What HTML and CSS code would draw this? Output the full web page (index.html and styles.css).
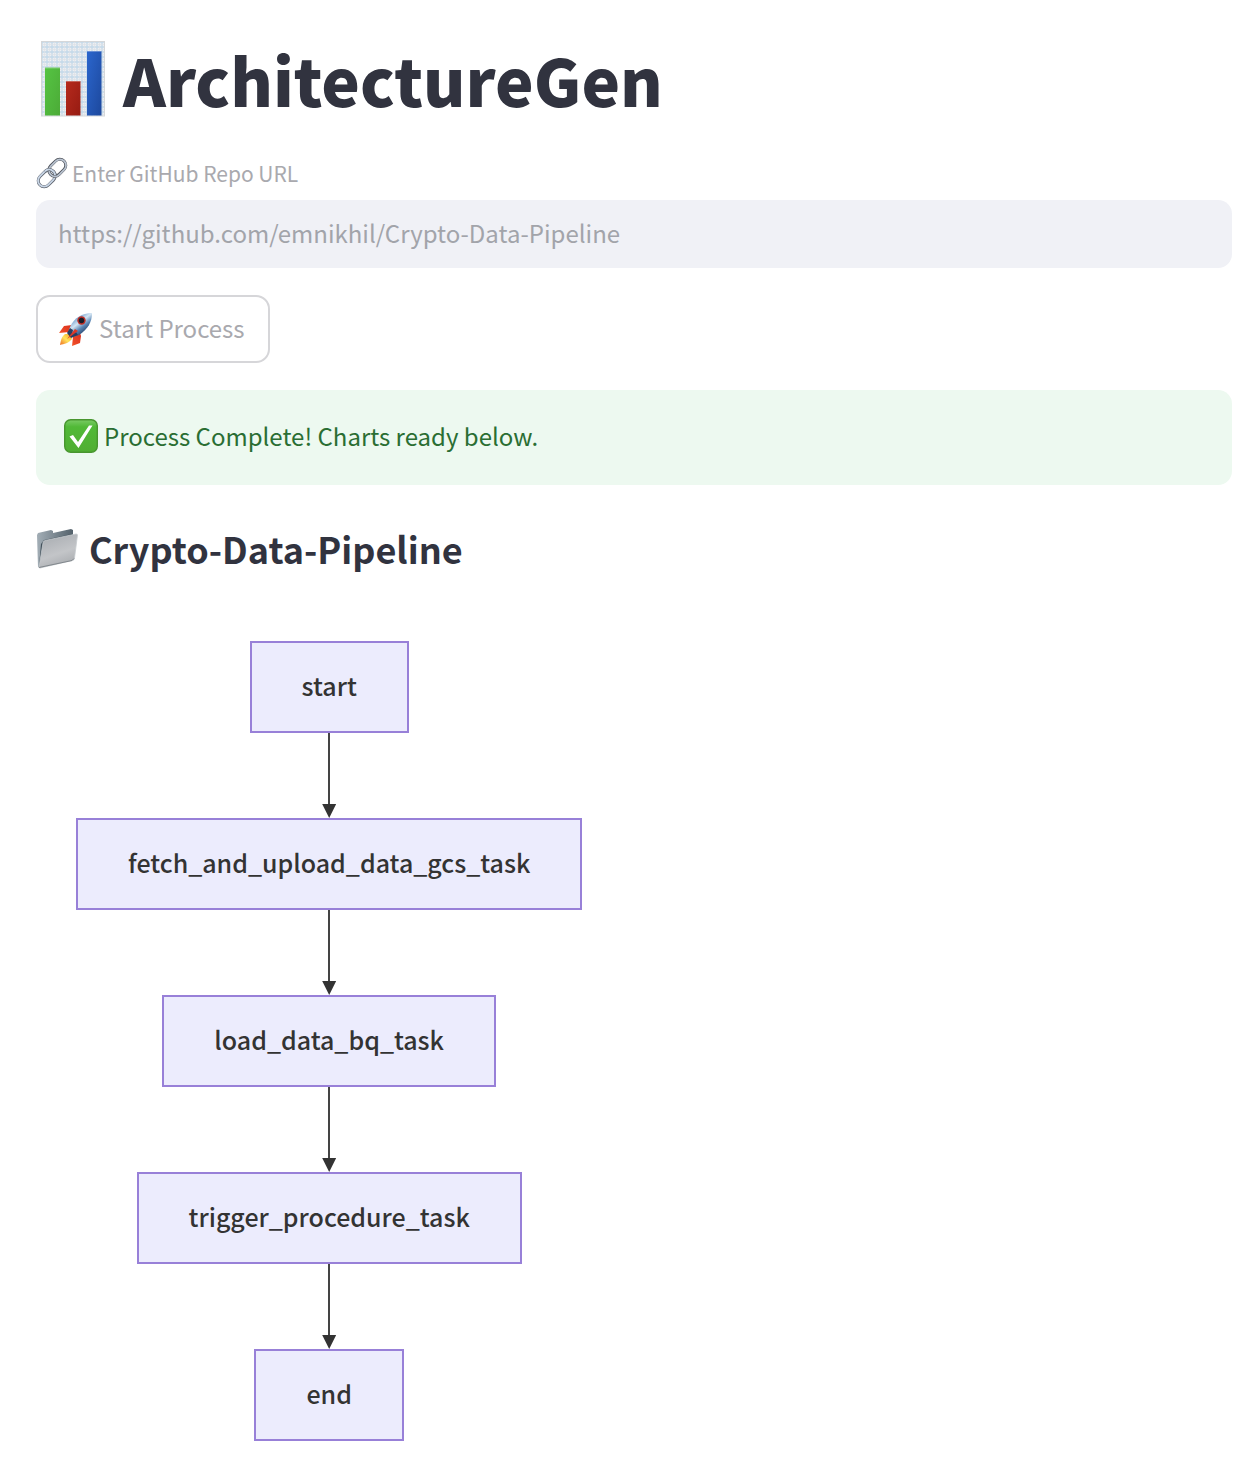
FILE: index.html
```html
<!DOCTYPE html>
<html lang="en">
<head>
<meta charset="utf-8">
<meta name="viewport" content="width=device-width, initial-scale=1">
<title>ArchitectureGen</title>
<link rel="stylesheet" href="styles.css">
</head>
<body>
<main class="app">
  <h1 class="title">
    <svg class="icon-chart" viewBox="0 0 64 76" aria-hidden="true">
      <defs>
        <pattern id="grid" width="5" height="5" patternUnits="userSpaceOnUse">
          <rect width="5" height="5" fill="#eeeff1"/>
          <path d="M0 1H5M1 0V5" stroke="#c4d9ea" stroke-width="1.3"/>
          <path d="M0 3.5H5M3.5 0V5" stroke="#dde3e8" stroke-width=".7"/>
        </pattern>
        <linearGradient id="green" x2="1" y2="1"><stop stop-color="#55c443"/><stop offset="1" stop-color="#4cab37"/></linearGradient>
        <linearGradient id="red" x2="1" y2="1"><stop stop-color="#b62a1d"/><stop offset="1" stop-color="#961b12"/></linearGradient>
        <linearGradient id="blue" x2="1" y2="1"><stop stop-color="#2b66cd"/><stop offset="1" stop-color="#1d489d"/></linearGradient>
      </defs>
      <rect x=".5" y=".5" width="63" height="74.500" fill="url(#grid)" stroke="#d5d7d9"/>
      <rect x="4" y="26.500" width="15" height="48" fill="url(#green)"/>
      <rect x="25" y="40" width="14.500" height="34.500" fill="url(#red)"/>
      <rect x="46" y="10" width="14.500" height="64.500" fill="url(#blue)"/>
      <path d="M4 27H19M25 40.500H39.500M46 10.500H60.500" stroke="#fff" stroke-opacity=".3"/>
    </svg>
    <span>ArchitectureGen</span>
  </h1>

  <form class="form">
    <label class="label" for="repo">
      <svg class="icon-link" viewBox="0 0 32 32" aria-hidden="true">
        <g fill="none" transform="rotate(-45 16 16)">
          <rect x="-1" y="10" width="19" height="12" rx="6" stroke="#5d636d" stroke-width="3"/>
          <rect x="-1" y="9.800" width="19" height="12" rx="6" stroke="#c8d5e5" stroke-width="1.900"/>
          <rect x="14" y="10" width="19" height="12" rx="6" stroke="#50545c" stroke-width="3"/>
          <rect x="14" y="10.300" width="19" height="12" rx="6" stroke="#b9c3d0" stroke-width="1.700"/>
          <path d="M12 10c6.500 0 7.500 7 4.500 10" stroke="#5d636d" stroke-width="3"/>
          <path d="M12 9.800c6.500 0 7.500 7 4.500 10" stroke="#c8d5e5" stroke-width="1.800"/>
        </g>
      </svg>
      <span>Enter GitHub Repo URL</span>
    </label>
    <input class="input" id="repo" type="text" value="https://github.com/emnikhil/Crypto-Data-Pipeline" disabled>
    <button class="button" type="button" disabled>
      <svg class="icon-rocket" viewBox="0 0 36 36" aria-hidden="true">
        <defs>
          <linearGradient id="hull" x1=".3" y1=".2" x2=".75" y2=".8"><stop stop-color="#6f9dcc"/><stop offset=".35" stop-color="#d4e5f3"/><stop offset=".65" stop-color="#5a86b5"/><stop offset="1" stop-color="#253f66"/></linearGradient>
          <linearGradient id="fin" x1="1" x2="0" y2="1"><stop stop-color="#ce2418"/><stop offset=".6" stop-color="#ee4a27"/><stop offset="1" stop-color="#ffbd46"/></linearGradient>
          <linearGradient id="flame" x1="1" x2="0" y2="1"><stop stop-color="#f7a427"/><stop offset=".5" stop-color="#ffe45c"/><stop offset="1" stop-color="#ee6a20"/></linearGradient>
        </defs>
        <path d="M14 14 6 15 1 22 11 21ZM22 22 23 25 22 32 14 35 15 26Z" fill="url(#fin)"/>
        <path d="M7 23C3 26 3 30 2 34c4-1 9-2 12-6l-2-5Z" fill="url(#flame)"/>
        <path d="M34 2C24 2 16 7 12 16l-2 6 4 4 7-2C30 18 34 11 34 2Z" fill="url(#hull)"/>
        <path d="m12 17-3 5 4 5 7-3-2-3-4 2 1-4Z" fill="#273e60"/>
        <path d="m17 18-8 10 11-8Z" fill="#db3826"/>
        <circle cx="23.500" cy="9.500" r="4.200" fill="#bd2e26"/>
        <circle cx="23.500" cy="9.500" r="2.700" fill="#171c27"/>
      </svg>
      <span class="text">Start Process</span>
    </button>
  </form>

  <div class="alert" role="status">
    <svg class="icon-check" viewBox="0 0 36 36" aria-hidden="true">
      <defs><linearGradient id="box" x2="0" y2="1"><stop stop-color="#7acb65"/><stop offset=".22" stop-color="#51b937"/><stop offset="1" stop-color="#50ae32"/></linearGradient></defs>
      <rect x="1.700" y="1.700" width="32.600" height="32.600" rx="6" fill="url(#box)" stroke="#48962f" stroke-width="1.400"/>
      <path d="M6.500 18.500 10 17l5 7L26 7.500h3.500L15.500 30Z" fill="#fff"/>
    </svg>
    <span>Process Complete! Charts ready below.</span>
  </div>

  <h2 class="heading">
    <svg class="icon-folder" viewBox="0 0 42 40" aria-hidden="true">
      <defs>
        <linearGradient id="back" x2="1"><stop stop-color="#a3aeb6"/><stop offset="1" stop-color="#53616b"/></linearGradient>
        <linearGradient id="front" x1=".2" x2=".6" y2="1"><stop stop-color="#a8acb1"/><stop offset=".6" stop-color="#c3c5c8"/><stop offset="1" stop-color="#a8abaf"/></linearGradient>
      </defs>
      <path d="M1 6 2 4l13-3 2 1v2l18-4 2 1v7L4 39l-2-1Z" fill="url(#back)"/>
      <path d="M5 15 8 11 36 5v5L6 33 3 37Z" fill="#43515b"/>
      <path d="M7 14q0-2 2-2.500L40 5q1.500 0 1.500 1l-3 23q0 2-2 2.500L4 39q-1 0-1-1Z" fill="url(#front)" stroke="#c7cbcf" stroke-width=".8"/>
      <path d="m3 38.500 33-7 2-2" fill="none" stroke="#81878c" stroke-width="1"/>
    </svg>
    <span class="text">Crypto-Data-Pipeline</span>
  </h2>

  <section class="diagram" aria-label="Task flow">
    <div class="node">start</div>
    <div class="edge"></div>
    <div class="node">fetch_and_upload_data_gcs_task</div>
    <div class="edge"></div>
    <div class="node">load_data_bq_task</div>
    <div class="edge"></div>
    <div class="node">trigger_procedure_task</div>
    <div class="edge"></div>
    <div class="node">end</div>
  </section>
</main>
</body>
</html>
```
FILE: styles.css
```css
* { box-sizing: border-box; }

body {
  margin: 0;
  background: #fff;
  color: #31333f;
  font-family: "Noto Sans CJK SC", "Noto Sans", sans-serif;
  font-size: 24px;
  line-height: 40px;
}

svg { display: block; flex: none; }

.app { padding: 35px 24px 18px 36px; }

.text { padding-bottom: 2px; }

.title {
  display: flex;
  align-items: center;
  gap: 18px;
  height: 88px;
  margin: 0;
  padding-left: 5px;
  font-size: 65px;
  font-weight: 900;
  line-height: 88px;
}
.icon-chart { width: 64px; height: 76px; }

.form {
  display: flex;
  flex-direction: column;
  align-items: flex-start;
  margin-top: 32px;
}

.label {
  display: flex;
  align-items: center;
  gap: 4px;
  height: 36px;
  margin-bottom: 9px;
  color: #a9a9ae;
  font-size: 21px;
}
.icon-link { width: 32px; height: 32px; }

.input {
  width: 100%;
  height: 68px;
  padding: 0 22px 3px;
  border: 0;
  border-radius: 14px;
  background: #f0f1f6;
  color: #a2a4aa;
  font: inherit;
}

.button {
  display: flex;
  align-items: center;
  gap: 5px;
  height: 68px;
  margin-top: 27px;
  padding: 0 23px 0 20px;
  border: 2px solid #d6d6d9;
  border-radius: 14px;
  background: #fff;
  color: #a9a9ae;
  font: inherit;
}
.icon-rocket { width: 36px; height: 36px; }

.alert {
  display: flex;
  align-items: center;
  gap: 5px;
  height: 95px;
  margin-top: 27px;
  padding: 0 27px 3px;
  border-radius: 14px;
  background: #edf9f0;
  color: #2a6e33;
}
.icon-check { width: 36px; height: 36px; }

.heading {
  display: flex;
  align-items: center;
  gap: 11px;
  height: 50px;
  margin: 39px 0 0;
  font-size: 36px;
  font-weight: 700;
  line-height: 50px;
}
.icon-folder { width: 42px; height: 40px; }

.diagram {
  display: flex;
  flex-direction: column;
  align-items: center;
  width: fit-content;
  margin-top: 67px;
  padding-left: 40px;
  color: #333;
  font-family: "Trebuchet MS", "Noto Sans CJK SC", sans-serif;
  font-size: 25px;
  font-weight: 500;
}

.node {
  padding: 20px 50px 24px;
  border: 2px solid #9880d8;
  background: #ececfd;
  line-height: 44px;
}

.edge {
  display: flex;
  flex-direction: column;
  align-items: center;
  height: 85px;
}
.edge::before {
  content: "";
  flex: 1;
  width: 2px;
  background: #444;
}
.edge::after {
  content: "";
  width: 14px;
  height: 14px;
  background: #333;
  clip-path: polygon(0 0, 100% 0, 50% 100%);
}
```
